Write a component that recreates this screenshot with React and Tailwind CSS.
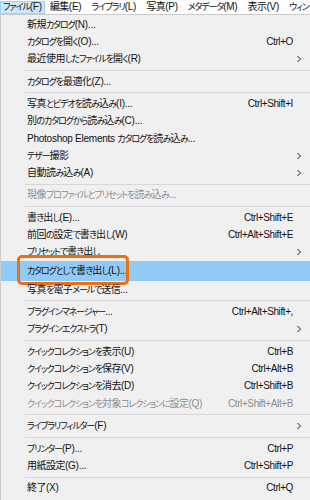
import React from "react";

const menuBar = ["ファイル(F)", "編集(E)", "ライブラリ(L)", "写真(P)", "メタデータ(M)", "表示(V)", "ウィンドウ(W)"];

const items = [
  { label: "新規カタログ(N)..." },
  { label: "カタログを開く(O)...", key: "Ctrl+O" },
  { label: "最近使用したファイルを開く(R)", sub: true },
  { sep: true },
  { label: "カタログを最適化(Z)..." },
  { sep: true },
  { label: "写真とビデオを読み込み(I)...", key: "Ctrl+Shift+I" },
  { label: "別のカタログから読み込み(C)..." },
  { label: "Photoshop Elements カタログを読み込み..." },
  { label: "テザー撮影", sub: true },
  { label: "自動読み込み(A)", sub: true },
  { sep: true },
  { label: "現像プロファイルとプリセットを読み込み...", off: true },
  { sep: true },
  { label: "書き出し(E)...", key: "Ctrl+Shift+E" },
  { label: "前回の設定で書き出し(W)", key: "Ctrl+Alt+Shift+E" },
  { label: "プリセットで書き出し", sub: true },
  { label: "カタログとして書き出し(L)...", active: true },
  { label: "写真を電子メールで送信..." },
  { sep: true },
  { label: "プラグインマネージャー...", key: "Ctrl+Alt+Shift+," },
  { label: "プラグインエクストラ(T)", sub: true },
  { sep: true },
  { label: "クイックコレクションを表示(U)", key: "Ctrl+B" },
  { label: "クイックコレクションを保存(V)", key: "Ctrl+Alt+B" },
  { label: "クイックコレクションを消去(D)", key: "Ctrl+Shift+B" },
  { label: "クイックコレクションを対象コレクションに設定(Q)", key: "Ctrl+Shift+Alt+B", off: true },
  { sep: true },
  { label: "ライブラリフィルター(F)", sub: true },
  { sep: true },
  { label: "プリンター(P)...", key: "Ctrl+P" },
  { label: "用紙設定(G)...", key: "Ctrl+Shift+P" },
  { sep: true },
  { label: "終了(X)", key: "Ctrl+Q" },
];

// kana in the screenshot are narrow (Meiryo UI), so set them smaller and tighter
const Jp = ({ text }) => {
  const runs = text.match(/[\u3040-\u30ff]+|[\u4e00-\u9fff]+|[^\u3040-\u30ff\u4e00-\u9fff]+/g) || [];
  return runs.map((r, i) => {
    if (/[\u3040-\u30ff]/.test(r))
      return (
        <span key={i} className="text-[9px] tracking-[-1.1px]">
          {r}
        </span>
      );
    if (/[\u4e00-\u9fff]/.test(r))
      return (
        <span key={i} className="tracking-[-0.5px]">
          {r}
        </span>
      );
    return (
      <span key={i} className="tracking-[-0.25px]">
        {r}
      </span>
    );
  });
};

const Chevron = () => (
  <svg width="4" height="7" viewBox="0 0 4 7" className="absolute right-[9px] top-1/2 -translate-y-1/2">
    <path d="M0.5 0.5 L3.5 3.5 L0.5 6.5" fill="none" stroke="#222" strokeWidth="1" />
  </svg>
);

const MenuItem = ({ item }) => {
  if (item.sep) {
    return (
      <div className="flex h-[5.4px] items-center pl-[24px]">
        <div className="h-px w-full bg-[#d7d7d7]" />
      </div>
    );
  }
  const color = item.off ? "text-[#8e8e8e]" : "text-[#111]";
  return (
    <div
      className={`relative flex items-center pl-[26px] pr-[17px] ${
        item.active ? "h-[20px] bg-[#91c9f7]" : "h-[17.2px]"
      } ${color}`}
    >
      <span className="whitespace-nowrap">
        <Jp text={item.label} />
      </span>
      {item.key && <span className="ml-auto whitespace-nowrap tracking-[-0.4px]">{item.key}</span>}
      {item.sub && <Chevron />}
      {item.active && (
        <div className="absolute left-[16px] top-[-6px] h-[30px] w-[112px] rounded-[5px] border-[3px] border-[#ec6f12]" />
      )}
    </div>
  );
};

export default function App() {
  return (
    <div
      className="h-[500px] w-[310px] overflow-hidden bg-white text-[10px] leading-none [font-feature-settings:'palt']"
      style={{ fontFamily: '"Liberation Sans", "Noto Sans CJK JP", sans-serif' }}
    >
      <div className="flex h-[14px] items-center overflow-hidden whitespace-nowrap text-[#111]">
        {menuBar.map((m, i) => (
          <div
            key={m}
            className={`flex h-[13px] shrink-0 items-center border ${
              i === 0 ? "border-[#99d1ff] bg-[#cce8ff] px-[2px]" : "border-transparent px-[4px]"
            }`}
          >
            <Jp text={m} />
          </div>
        ))}
      </div>
      <div className="h-[486px] border-l border-t border-[#cccccc] bg-[#f0f0f0] pt-[1px]">
        {items.map((item, i) => (
          <MenuItem key={i} item={item} />
        ))}
      </div>
    </div>
  );
}
